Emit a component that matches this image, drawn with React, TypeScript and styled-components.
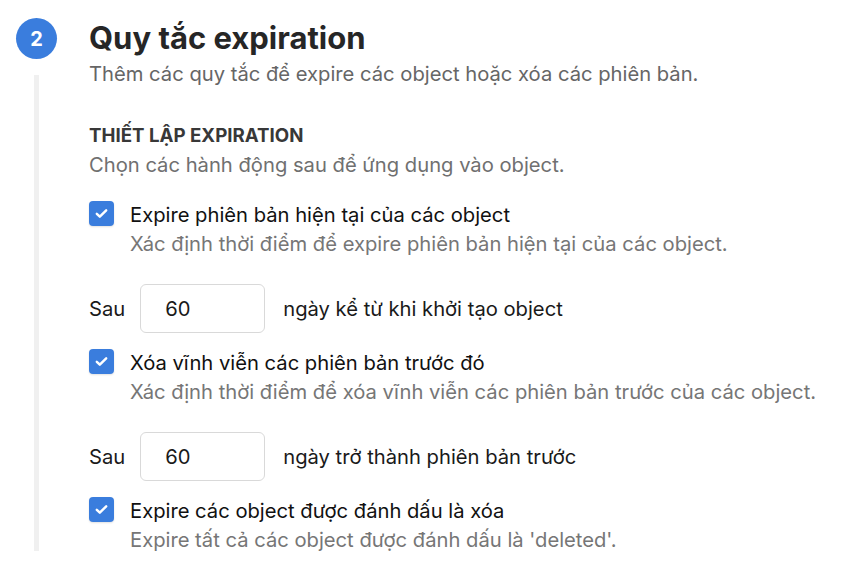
import * as React from 'react';
import styled, { createGlobalStyle } from 'styled-components';

const GlobalStyle = createGlobalStyle`
  html, body {
    margin: 0;
    padding: 0;
    background: #ffffff;
  }
  body {
    font-family: Inter, 'Noto Sans', 'Liberation Sans', sans-serif;
    -webkit-font-smoothing: antialiased;
  }
`

interface ExpirationRule {
  title: string;
  description: string;
  afterText?: string;
  days?: number;
}

const rules: ExpirationRule[] = [
  {
    title: 'Expire phiên bản hiện tại của các object',
    description: 'Xác định thời điểm để expire phiên bản hiện tại của các object.',
    days: 60,
    afterText: 'ngày kể từ khi khởi tạo object',
  },
  {
    title: 'Xóa vĩnh viễn các phiên bản trước đó',
    description: 'Xác định thời điểm để xóa vĩnh viễn các phiên bản trước của các object.',
    days: 60,
    afterText: 'ngày trở thành phiên bản trước',
  },
  {
    title: 'Expire các object được đánh dấu là xóa',
    description: "Expire tất cả các object được đánh dấu là 'deleted'.",
  },
]

const Step = styled.section`
  display: flex;
  padding-top: 18px;
`

const Rail = styled.div`
  width: 73px;
  display: flex;
  flex-direction: column;
  align-items: center;
  flex-shrink: 0;
  margin-bottom: 3px;
`

const StepNumber = styled.div`
  width: 41px;
  height: 41px;
  border-radius: 50%;
  background: #3a7ddd;
  color: #ffffff;
  font-size: 20px;
  font-weight: 700;
  display: flex;
  align-items: center;
  justify-content: center;
`

const RailLine = styled.div`
  flex: 1;
  width: 5px;
  margin-top: 16px;
  background: #f0f0f0;
`

const Content = styled.div`
  flex: 1;
  padding-left: 16px;
  display: flex;
  flex-direction: column;
  font-size: 20.2px;
`

const Title = styled.h2`
  margin: 0;
  font-size: 31px;
  line-height: 40px;
  font-weight: 700;
  color: #262626;
`

const Subtitle = styled.p`
  margin: 2px 0 0;
  line-height: 28px;
  color: #666666;
`

const SectionHeading = styled.h3`
  margin: 36px 0 0;
  font-size: 18.7px;
  line-height: 24px;
  font-weight: 700;
  color: #383838;
  text-transform: uppercase;
`

const Hint = styled.p`
  margin: 3px 0 0;
  line-height: 28px;
  color: #707070;
`

const CheckRow = styled.label<{ $gap: number }>`
  display: flex;
  align-items: flex-start;
  gap: 16px;
  margin-top: ${p => p.$gap}px;
  cursor: pointer;
`

const Box = styled.span`
  width: 25px;
  height: 25px;
  margin-top: 1px;
  border-radius: 4px;
  background: #3a7ddd;
  box-shadow: 0 1px 2px rgba(0, 0, 0, 0.12);
  display: flex;
  align-items: center;
  justify-content: center;
  flex-shrink: 0;
`

const CheckText = styled.div`
  display: flex;
  flex-direction: column;
`

const CheckTitle = styled.span`
  line-height: 29px;
  color: #111111;
`

const CheckDescription = styled.span`
  line-height: 29px;
  color: #767676;
`

const DaysRow = styled.div`
  display: flex;
  align-items: center;
  margin-top: 26px;
  color: #1a1a1a;
`

const DaysInput = styled.input`
  box-sizing: border-box;
  width: 125px;
  height: 49px;
  margin: 0 18px 0 15px;
  padding: 0 0 0 24px;
  border: 1px solid #d9d9d9;
  border-radius: 6px;
  font-family: inherit;
  font-size: inherit;
  color: #1a1a1a;
  outline: none;
`

const CheckIcon = () => (
  <svg width="15" height="15" viewBox="0 0 16 16" fill="none">
    <path d="M3 8.3l3.2 3.1L13 4.6" stroke="#ffffff" strokeWidth="2.6" strokeLinecap="round" strokeLinejoin="round" />
  </svg>
)

const App = () => {
  return (
    <>
      <GlobalStyle />
      <Step>
        <Rail>
          <StepNumber>2</StepNumber>
          <RailLine />
        </Rail>
        <Content>
          <Title>Quy tắc expiration</Title>
          <Subtitle>Thêm các quy tắc để expire các object hoặc xóa các phiên bản.</Subtitle>

          <SectionHeading>Thiết lập expiration</SectionHeading>
          <Hint>Chọn các hành động sau để ứng dụng vào object.</Hint>

          {rules.map((rule, i) => (
            <React.Fragment key={rule.title}>
              <CheckRow $gap={i === 0 ? 21 : 15}>
                <Box><CheckIcon /></Box>
                <CheckText>
                  <CheckTitle>{rule.title}</CheckTitle>
                  <CheckDescription>{rule.description}</CheckDescription>
                </CheckText>
              </CheckRow>
              {rule.days && (
                <DaysRow>
                  <span>Sau</span>
                  <DaysInput defaultValue={rule.days} />
                  <span>{rule.afterText}</span>
                </DaysRow>
              )}
            </React.Fragment>
          ))}
        </Content>
      </Step>
    </>
  )
}

export default App
